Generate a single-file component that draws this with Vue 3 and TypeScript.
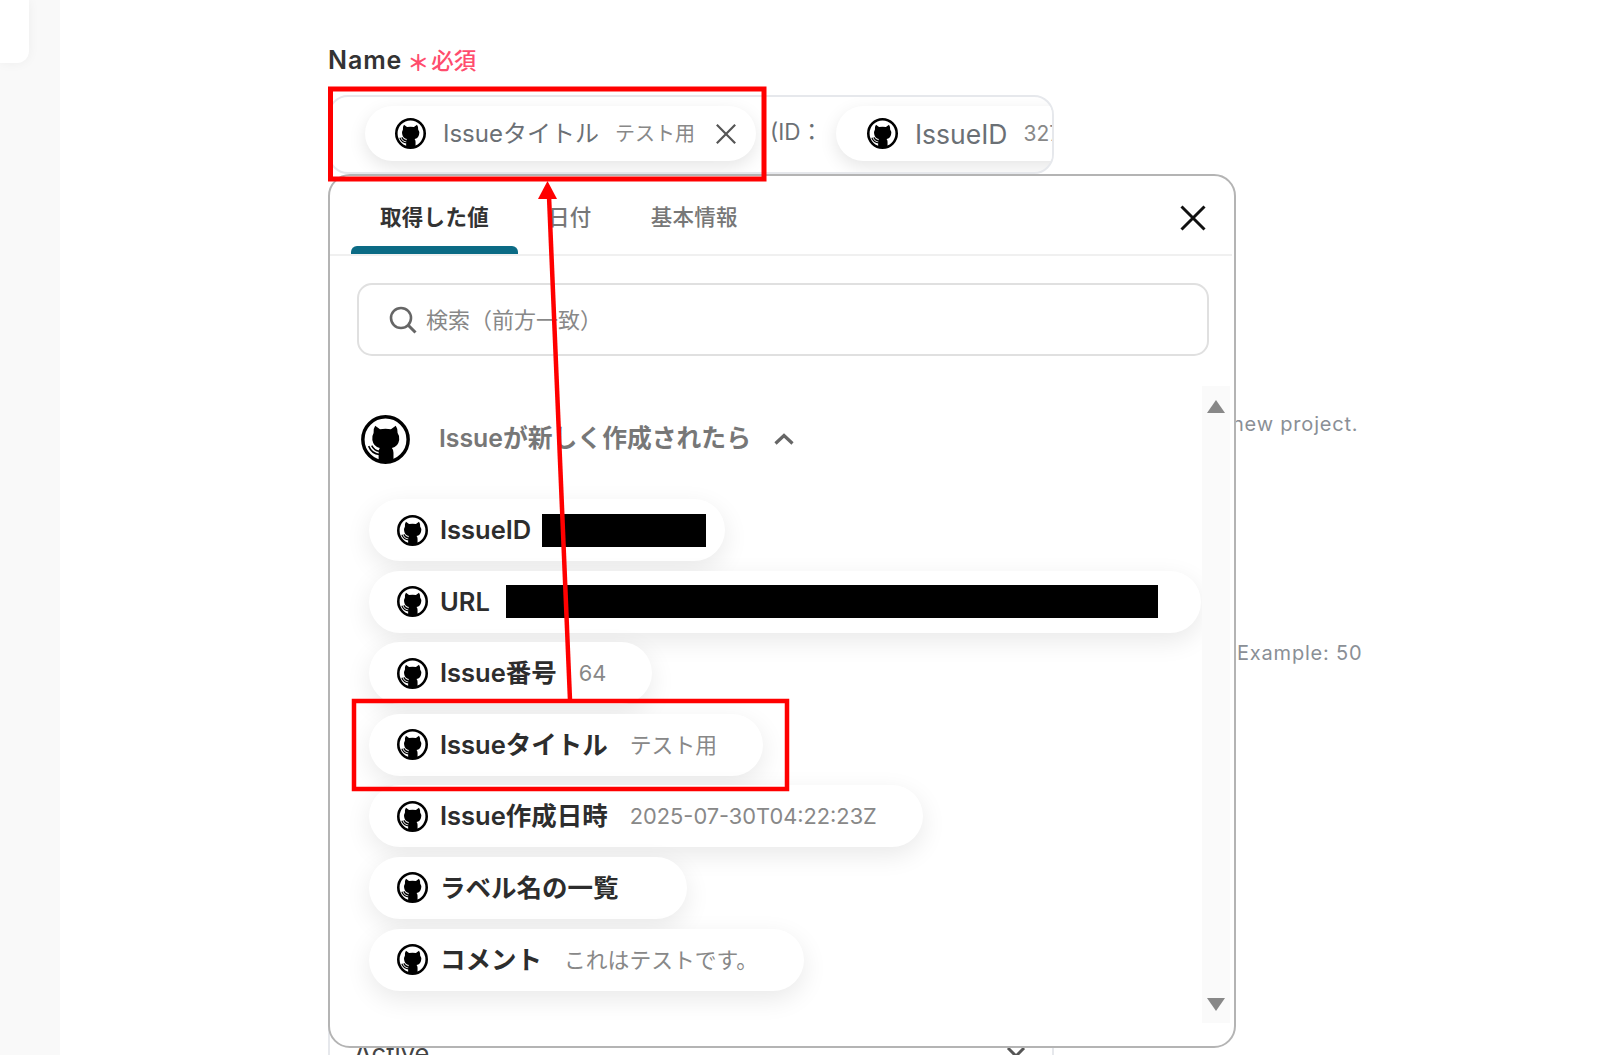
<script setup lang="ts">
interface Row {
  label: string;
  value?: string;
  redact?: number;
}
const rows: Row[] = [
  { label: 'IssueID', redact: 164 },
  { label: 'URL', redact: 652 },
  { label: 'Issue番号', value: '64' },
  { label: 'Issueタイトル', value: 'テスト用' },
  { label: 'Issue作成日時', value: '2025-07-30T04:22:23Z' },
  { label: 'ラベル名の一覧' },
  { label: 'コメント', value: 'これはテストです。' },
];
const tabs = ['取得した値', '日付', '基本情報'];
const octo =
  'M15 12.5L19.2 15.6Q24 14.7 28.8 15.6L33 12.5Q35 15.5 34.6 18.8Q36.6 21.4 36 25Q35 31 29.6 32Q31 33.6 31 36V44H18V36Q18 33.6 19 32Q13.6 31 12.5 25Q12 21.4 13.6 18.8Q13 15.5 15 12.5Z';
const tail = 'M7.5 30.5Q10.5 38 18 38.6M10.5 30Q13 35 18 35.5';
const catTransform = 'translate(-2.9 -3.4) scale(1.12)';
</script>

<template>
  <div class="page">
    <aside class="side"><div class="side-card"></div></aside>

    <main class="main">
      <div class="label">
        <span>Name</span><span class="req"><span class="star">＊</span>必須</span>
      </div>

      <div class="field-wrap">
        <div class="field">
          <div class="chip-sm first">
            <svg class="gh" viewBox="0 0 48 48"><circle cx="24" cy="24" r="22" fill="#fff" stroke="#000" stroke-width="4" /><path :d="octo" :transform="catTransform" fill="#000" /><path :d="tail" fill="none" stroke="#000" stroke-width="1.8" /></svg>
            <span class="chip-name">Issueタイトル</span>
            <span class="chip-val">テスト用</span>
            <svg class="chip-x" viewBox="0 0 24 24"><path d="M2 2L22 22M22 2L2 22" stroke="#555" stroke-width="2.4" fill="none" /></svg>
          </div>
          <span class="id-text">(ID：</span>
          <div class="chip-sm second">
            <svg class="gh" viewBox="0 0 48 48"><circle cx="24" cy="24" r="22" fill="#fff" stroke="#000" stroke-width="4" /><path :d="octo" :transform="catTransform" fill="#000" /><path :d="tail" fill="none" stroke="#000" stroke-width="1.8" /></svg>
            <span class="chip-name big">IssueID</span>
            <span class="chip-val num">3279</span>
          </div>
        </div>

        <section class="panel">
          <header class="tabs">
            <div v-for="(t, i) in tabs" :key="t" class="tab" :class="{ active: i === 0 }">{{ t }}</div>
            <svg class="close" viewBox="0 0 26 26"><path d="M1.5 1.5L24.5 24.5M24.5 1.5L1.5 24.5" stroke="#111" stroke-width="3" fill="none" /></svg>
          </header>

          <div class="search">
            <svg class="search-ic" viewBox="0 0 28 28"><circle cx="12" cy="12" r="10" fill="none" stroke="#666" stroke-width="2.6" /><path d="M19.5 19.5L26.5 26.5" stroke="#666" stroke-width="3" /></svg>
            <span>検索（前方一致）</span>
          </div>

          <div class="body">
            <div class="list">
              <div class="group">
                <svg class="gh-big" viewBox="0 0 48 48"><circle cx="24" cy="24" r="22.2" fill="#fff" stroke="#000" stroke-width="3.4" /><path :d="octo" :transform="catTransform" fill="#000" /><path :d="tail" fill="none" stroke="#000" stroke-width="1.5" /></svg>
                <span class="group-title">Issueが新しく作成されたら</span>
                <svg class="chev" viewBox="0 0 20 12"><path d="M1.5 10.5L10 2.5L18.5 10.5" fill="none" stroke="#666" stroke-width="3.2" /></svg>
              </div>
              <div class="rows">
                <div v-for="r in rows" :key="r.label" class="row" :class="{ hasredact: r.redact, bare: !r.value && !r.redact }">
                  <svg class="gh" viewBox="0 0 48 48"><circle cx="24" cy="24" r="22" fill="#fff" stroke="#000" stroke-width="4" /><path :d="octo" :transform="catTransform" fill="#000" /><path :d="tail" fill="none" stroke="#000" stroke-width="1.8" /></svg>
                  <span class="row-name">{{ r.label }}</span>
                  <span v-if="r.value" class="row-val">{{ r.value }}</span>
                  <span v-if="r.redact" class="redact" :style="{ width: r.redact + 'px' }"></span>
                </div>
              </div>
            </div>
            <div class="track">
              <span class="arrow up"></span>
              <span class="arrow down"></span>
            </div>
          </div>
        </section>
      </div>

      <p class="hint hint-a">new project.</p>
      <p class="hint hint-b">Example: 50</p>

      <div class="select">
        <span>Active</span>
        <svg class="select-chev" viewBox="0 0 20 12"><path d="M2 2L10 10L18 2" fill="none" stroke="#555" stroke-width="3" /></svg>
      </div>
    </main>

    <svg class="marks" viewBox="0 0 1600 1055">
      <rect x="330.5" y="89" width="433.5" height="90" fill="none" stroke="#f00" stroke-width="5" />
      <rect x="354" y="701" width="433" height="88" fill="none" stroke="#f00" stroke-width="4.5" />
      <line x1="570" y1="700" x2="549" y2="196" stroke="#f00" stroke-width="4.5" />
      <polygon points="547.5,181 538,199 557,199" fill="#f00" />
    </svg>
  </div>
</template>

<style>
html, body { margin: 0; background: #fff; }
</style>

<style scoped>
.page {
  position: relative;
  display: flex;
  width: 1600px;
  height: 1055px;
  overflow: hidden;
  background: #fff;
  font-family: Inter, "Noto Sans CJK JP", sans-serif;
  color: #333;
}
.side {
  width: 60px;
  flex: none;
  background: #f9f9f9;
}
.side-card {
  width: 29px;
  height: 63px;
  background: #fff;
  border-bottom-right-radius: 12px;
  box-shadow: 0 0 12px rgba(0, 0, 0, 0.05);
}
.main {
  flex: 1;
  padding: 46px 0 0 268px;
}
.label {
  display: flex;
  align-items: center;
  height: 29px;
  font-size: 25px;
  line-height: 29px;
  letter-spacing: 0.9px;
  font-weight: 600;
  color: #333;
}
.req {
  display: flex;
  align-items: center;
  margin-left: 5px;
  color: #ff4d6d;
  font-size: 22.5px;
  font-weight: 500;
  letter-spacing: 0;
}
.star {
  width: 22px;
  margin-right: 2px;
  font-size: 22px;
  line-height: 1;
  font-weight: 700;
  position: relative;
  top: 2px;
}
.field-wrap {
  position: relative;
  width: 726px;
  margin-top: 20px;
}
.field {
  display: flex;
  align-items: center;
  box-sizing: border-box;
  height: 79px;
  overflow: hidden;
  padding: 0 0 2px 35px;
  border: 2px solid #e6e8ec;
  border-radius: 20px;
  background: #fff;
}
.chip-sm {
  display: flex;
  flex: none;
  align-items: center;
  height: 55px;
  border-radius: 28px;
  background: #fff;
  box-shadow: 0 6px 18px rgba(0, 0, 0, 0.1);
}
.chip-sm.first {
  width: 391px;
  padding-left: 30px;
  box-sizing: border-box;
}
.chip-sm.second {
  width: 300px;
  padding-left: 31px;
  box-sizing: border-box;
  margin-left: 13px;
}
.gh {
  flex: none;
  width: 31px;
  height: 31px;
}
.chip-name {
  margin-left: 17px;
  font-size: 24px;
  line-height: 30px;
  color: #6b7075;
  white-space: nowrap;
}
.chip-name.big {
  font-size: 26.5px;
}
.chip-val {
  margin-left: 16px;
  font-size: 20px;
  line-height: 30px;
  color: #888;
  white-space: nowrap;
}
.chip-val.num {
  margin-left: 16px;
  font-size: 21px;
}
.chip-x {
  width: 22px;
  height: 22px;
  margin-left: 20px;
}
.id-text {
  margin-left: 14px;
  font-size: 22.5px;
  line-height: 30px;
  color: #6b7075;
  white-space: nowrap;
  position: relative;
  top: -2px;
}
.panel {
  position: absolute;
  z-index: 2;
  top: 79px;
  left: 0;
  box-sizing: border-box;
  width: 908px;
  height: 874px;
  border: 2px solid #b4b4b4;
  border-radius: 22px;
  background: #fff;
}
.tabs {
  display: flex;
  position: relative;
  height: 78px;
  padding-left: 20px;
  margin: 0 2px 0 0;
  border-bottom: 2px solid #f0f0f0;
}
.tab {
  position: relative;
  display: flex;
  align-items: center;
  justify-content: center;
  box-sizing: border-box;
  height: 78px;
  padding: 4px 30px 0;
  font-size: 21.5px;
  line-height: 30px;
  font-weight: 500;
  color: #777;
  letter-spacing: 0.3px;
}
.tab + .tab {
  margin-left: -1px;
}
.tab.active {
  font-weight: 700;
  color: #333;
}
.tab.active::after {
  content: "";
  position: absolute;
  left: 1px;
  right: 1px;
  bottom: 0;
  height: 8px;
  border-radius: 6px 6px 0 0;
  background: #0b6b85;
}
.close {
  position: absolute;
  right: 26px;
  top: 29px;
  width: 26px;
  height: 26px;
}
.search {
  display: flex;
  align-items: center;
  box-sizing: border-box;
  height: 73px;
  margin: 27px 25px 0 27px;
  padding-left: 30px;
  border: 2px solid #e0e0e0;
  border-radius: 15px;
  font-size: 22px;
  line-height: 30px;
  color: #888;
}
.search-ic {
  width: 28px;
  height: 28px;
  margin-right: 9px;
}
.body {
  display: flex;
  height: 637px;
  margin-top: 30px;
}
.list {
  flex: 1;
  min-width: 0;
  padding: 29px 0 0 31px;
}
.group {
  display: flex;
  align-items: center;
  height: 48px;
}
.gh-big {
  width: 49px;
  height: 49px;
}
.group-title {
  margin-left: 29px;
  padding-bottom: 3px;
  font-size: 24.8px;
  line-height: 30px;
  font-weight: 600;
  color: #777;
  white-space: nowrap;
}
.chev {
  width: 20px;
  height: 12px;
  margin-left: 23px;
}
.rows {
  display: flex;
  flex-direction: column;
  align-items: flex-start;
  gap: 9.6px;
  margin: 36px 0 0 8px;
}
.row {
  display: flex;
  align-items: center;
  box-sizing: border-box;
  height: 62px;
  padding: 0 46px 0 28px;
  border-radius: 31px;
  background: #fff;
  box-shadow: 0 8px 26px rgba(0, 0, 0, 0.09);
}
.row.hasredact {
  padding-right: 19px;
}
.row.bare {
  padding-right: 68px;
}
.row-name {
  margin-left: 12px;
  font-size: 25.5px;
  line-height: 30px;
  font-weight: 600;
  color: #2d2d2d;
  white-space: nowrap;
}
.row-val {
  margin-left: 22px;
  font-size: 21.8px;
  line-height: 30px;
  color: #888;
  white-space: nowrap;
}
.redact {
  height: 33px;
  margin-left: 11px;
  background: #000;
}
.row.hasredact:nth-child(2) .redact {
  margin-left: 16px;
  margin-right: 24px;
}
.track {
  position: relative;
  flex: none;
  width: 28px;
  margin-right: 4px;
  background: #fafafa;
}
.arrow {
  position: absolute;
  left: 5px;
  width: 0;
  height: 0;
  border-left: 9px solid transparent;
  border-right: 9px solid transparent;
}
.arrow.up {
  top: 14px;
  border-bottom: 13px solid #888;
}
.arrow.down {
  bottom: 12px;
  border-top: 13px solid #888;
}
.hint {
  margin: 0;
  font-size: 20px;
  line-height: 24px;
  letter-spacing: 0.8px;
  color: #8a8f96;
  white-space: nowrap;
}
.hint-a {
  margin-top: 238px;
  padding-left: 904px;
}
.hint-b {
  margin-top: 205px;
  padding-left: 909px;
}
.select {
  display: flex;
  align-items: center;
  justify-content: space-between;
  box-sizing: border-box;
  width: 726px;
  height: 80px;
  margin-top: 347px;
  padding: 0 26px 0 24px;
  border: 2px solid #e6e8ec;
  border-radius: 16px;
  font-size: 25.5px;
  color: #444;
}
.select-chev {
  width: 20px;
  height: 12px;
}
.marks {
  position: absolute;
  z-index: 3;
  inset: 0;
  width: 1600px;
  height: 1055px;
  pointer-events: none;
}
</style>
